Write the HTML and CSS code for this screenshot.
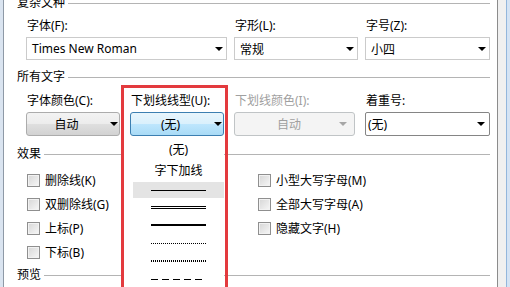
FILE: index.html
```html
<!DOCTYPE html>
<html lang="zh-CN">
<head>
  <meta charset="UTF-8">
  <title>字体</title>
  <link rel="stylesheet" href="styles.css">
</head>
<body>
  <div class="window">
    <div class="frame-left"></div>

    <div class="dialog">
      <div class="group-title first"><span>复杂文种</span></div>
      <div class="fields row-one">
        <div class="field w-font">
          <label>字体(F):</label>
          <div class="select"><span class="value">Times New Roman</span><i class="arrow"></i></div>
        </div>
        <div class="field w-style">
          <label>字形(L):</label>
          <div class="select"><span class="value">常规</span><i class="arrow"></i></div>
        </div>
        <div class="field w-size">
          <label>字号(Z):</label>
          <div class="select"><span class="value">小四</span><i class="arrow"></i></div>
        </div>
      </div>

      <div class="group-title"><span>所有文字</span></div>
      <div class="fields row-two">
        <div class="field w-color">
          <label>字体颜色(C):</label>
          <div class="btn"><span class="value">自动</span><i class="arrow"></i></div>
        </div>
        <div class="field w-under">
          <label>下划线线型(U):</label>
          <div class="btn active"><span class="value">(无)</span><i class="arrow"></i></div>
        </div>
        <div class="field w-ucolor">
          <label class="muted">下划线颜色(I):</label>
          <div class="btn disabled"><span class="value">自动</span><i class="arrow"></i></div>
        </div>
        <div class="field w-emph">
          <label>着重号:</label>
          <div class="combo"><span class="value">(无)</span><i class="arrow"></i></div>
        </div>
      </div>

      <div class="group-title"><span>效果</span></div>
      <div class="checks">
        <div class="check-col left">
          <div class="check"><span class="box"></span>删除线(K)</div>
          <div class="check"><span class="box"></span>双删除线(G)</div>
          <div class="check"><span class="box"></span>上标(P)</div>
          <div class="check"><span class="box"></span>下标(B)</div>
        </div>
        <div class="check-col">
          <div class="check"><span class="box"></span>小型大写字母(M)</div>
          <div class="check"><span class="box"></span>全部大写字母(A)</div>
          <div class="check"><span class="box"></span>隐藏文字(H)</div>
        </div>
      </div>

      <div class="group-title last"><span>预览</span></div>
    </div>

    <div class="frame-right"></div>

    <!-- open underline list -->
    <div class="drop-list">
      <div class="item text first-item">(无)</div>
      <div class="item text">字下加线</div>
      <div class="item line hover"><span class="sample single"></span></div>
      <div class="item line"><span class="sample double"></span></div>
      <div class="item line"><span class="sample thick"></span></div>
      <div class="item line"><span class="sample dotted"></span></div>
      <div class="item line"><span class="sample dotted-heavy"></span></div>
      <div class="item line"><span class="sample dashed"></span></div>
    </div>

    <!-- annotation box -->
    <div class="mark"></div>
  </div>
</body>
</html>
```

FILE: styles.css
```css
body {
  margin: 0;
  font-family: "Noto Sans", "Noto Sans CJK SC", sans-serif;
  font-size: 12px;
  color: #000;
  background: #fff;
  overflow: hidden;
}

.window {
  position: relative;
  display: flex;
  height: 287px;
  overflow: hidden;
}

.frame-left {
  width: 3px;
  background: #dae4f0;
  border-right: 1px solid #8e99a6;
}

.frame-right {
  width: 12px;
  border-left: 1px solid #8c8c8c;
  background: linear-gradient(to right, #f0f0f0 8px, #93b6dc 8px, #93b6dc 9px, #d4e3f4 9px);
}

.dialog {
  flex: 1;
  background: #fff;
  padding: 0 7px 0 13px;
}

.group-title {
  display: flex;
  align-items: center;
  height: 14px;
  line-height: 14px;
  white-space: nowrap;
}

.group-title::after {
  content: "";
  flex: 1;
  border-top: 1px solid #b4b4b4;
  margin-left: 3px;
}

.group-title.first {
  margin-top: -4px;
}

.fields {
  display: flex;
  margin-left: 9px;
}

.row-one {
  gap: 7px;
  margin-top: 9px;
  margin-bottom: 10px;
}

.row-two {
  gap: 10px;
  margin-top: 10px;
  margin-bottom: 11px;
}

.field label {
  display: block;
  padding-left: 1px;
  line-height: 14px;
  margin-bottom: 4px;
  white-space: nowrap;
}

.field label.muted {
  color: #a0a0a0;
}

.w-font { width: 201px; }
.w-style { width: 124px; }
.w-size { width: 125px; }
.w-color { width: 94px; }
.w-under { width: 94px; }
.w-ucolor { width: 121px; }
.w-emph { width: 125px; }

.arrow {
  width: 0;
  height: 0;
  border-left: 4px solid transparent;
  border-right: 4px solid transparent;
  border-top: 4px solid #000;
  margin-left: 4px;
}

.select {
  height: 23px;
  box-sizing: border-box;
  border: 1px solid #cbcbcb;
  background: #fff;
  display: flex;
  align-items: center;
  padding: 0 3px 0 5px;
}

.select .value {
  flex: 1;
  white-space: nowrap;
}

.btn {
  height: 24px;
  box-sizing: border-box;
  border: 1px solid #acacac;
  border-radius: 3px;
  background: linear-gradient(#f3f3f3 0%, #ececec 50%, #dfdfdf 50%, #d2d2d2 100%);
  display: flex;
  align-items: center;
  padding: 0 1px 0 0;
}

.btn .value {
  flex: 1;
  text-align: center;
}

.btn.active {
  border-color: #3c7fb1;
  background: linear-gradient(#e8f5fc 0%, #d9f0fc 50%, #bee6fd 50%, #a9dbf6 100%);
}

.btn.disabled {
  color: #a0a0a0;
  border-color: #c0c4c6;
  background: #f4f4f4;
  padding-right: 7px;
}

.btn.disabled .value {
  padding-left: 8px;
}

.btn.disabled .arrow {
  border-top-color: #a6a6a6;
}

.combo {
  height: 24px;
  box-sizing: border-box;
  border: 1px solid #858585;
  border-radius: 2px;
  background: #fff;
  display: flex;
  align-items: center;
  padding: 0 4px 0 2px;
}

.combo .value {
  flex: 1;
}

.checks {
  display: flex;
  margin: 7px 0 4px 10px;
}

.check-col.left {
  width: 231px;
}

.check {
  display: flex;
  align-items: center;
  height: 24px;
  white-space: nowrap;
}

.box {
  width: 13px;
  height: 13px;
  box-sizing: border-box;
  border: 1px solid #8f8f8f;
  background: linear-gradient(135deg, #d6d6d6, #f7f7f7);
  box-shadow: inset 0 0 0 1px #f2f2f2;
  margin-right: 5px;
}

.drop-list {
  position: absolute;
  left: 124px;
  top: 136px;
  width: 100px;
  height: 160px;
  box-sizing: border-box;
  padding: 2px 0 0 9px;
  background: #fff;
}

.item {
  display: flex;
  align-items: center;
  justify-content: center;
  height: 18px;
}

.item.text {
  height: 21px;
}

.item.hover {
  background: #e4e4e4;
  height: 16px;
  margin: 2px 0 0;
}

.item.line + .item.line {
  margin-top: 0;
}

.sample {
  display: block;
  width: 55px;
}

.sample.single {
  height: 1px;
  background: #000;
}

.sample.double {
  height: 3px;
  border-top: 1px solid #000;
  border-bottom: 1px solid #000;
  box-sizing: border-box;
}

.sample.thick {
  height: 2px;
  background: #000;
}

.sample.dotted {
  height: 1px;
  background: repeating-linear-gradient(to right, #000 0 1px, transparent 1px 2px);
}

.sample.dotted-heavy {
  height: 2px;
  background: repeating-linear-gradient(to right, #000 0 1px, transparent 1px 2px);
}

.sample.dashed {
  height: 1px;
  background: repeating-linear-gradient(to right, #000 0 7px, transparent 7px 11px);
}

.mark {
  position: absolute;
  left: 121px;
  top: 85px;
  width: 107px;
  height: 220px;
  box-sizing: border-box;
  border: 3px solid #e33a3e;
}
```
